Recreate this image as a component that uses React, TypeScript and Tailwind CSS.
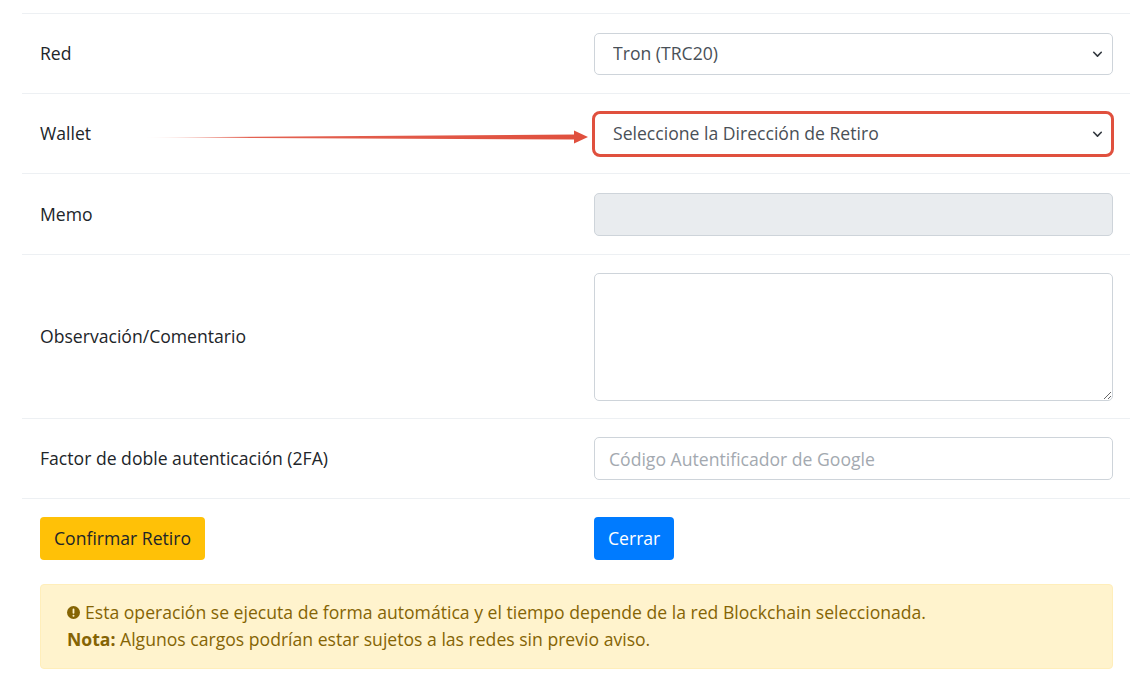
import React from 'react';

const font = { fontFamily: '"Open Sans", "Noto Sans", sans-serif' };

// Chevron del select
const Chevron = () => (
  <svg className="pointer-events-none absolute right-[10px] top-1/2 -translate-y-1/2 w-[11px] h-[11px]" viewBox="0 0 16 16">
    <path d="M2.5 5.5 8 11l5.5-5.5" fill="none" stroke="#343a40" strokeWidth={2.4} strokeLinecap="round" strokeLinejoin="round" />
  </svg>
);

const Row: React.FC<{ label: string; h?: string; children: React.ReactNode }> = ({ label, h = 'h-[80px]', children }) => (
  <div className={`flex items-center border-t border-[#edf0f3] ${h}`}>
    <div className="w-[555px] pl-[18px] text-[17.6px] text-[#212529]">{label}</div>
    <div className="flex-1 pl-[17px] pr-[17px]">{children}</div>
  </div>
);

export default function App() {
  return (
    <div className="w-[1146px] h-[698px] bg-white overflow-hidden" style={font}>
      <div className="relative ml-[22px] mr-[16px] pt-[13px]">
        <Row label="Red">
          <div className="relative">
            <select className="appearance-none w-full h-[42px] rounded-[5px] border border-[#ced4da] bg-white pl-[18px] text-[17.6px] text-[#495057] outline-none" style={font}>
              <option>Tron (TRC20)</option>
            </select>
            <Chevron />
          </div>
        </Row>

        <Row label="Wallet">
          <div className="relative">
            <select className="appearance-none w-full h-[42px] rounded-[5px] border border-[#ced4da] bg-white pl-[18px] text-[17.6px] text-[#495057] outline-none" style={font}>
              <option>Seleccione la Dirección de Retiro</option>
            </select>
            <Chevron />
            {/* recuadro rojo de resaltado */}
            <div className="pointer-events-none absolute -left-[2px] -right-[1px] -top-[2px] -bottom-[2px] rounded-[8px] border-[3px] border-[#e0503e]" />
          </div>
        </Row>

        <Row label="Memo" h="h-[81px]">
          <input disabled className="w-full h-[43px] rounded-[5px] border border-[#ced4da] bg-[#e9ecef]" />
        </Row>

        <Row label="Observación/Comentario" h="h-[164px]">
          <textarea className="block w-full h-[128px] rounded-[5px] border border-[#ced4da] bg-white outline-none" />
        </Row>

        <Row label="Factor de doble autenticación (2FA)">
          <input
            placeholder="Código Autentificador de Google"
            className="w-full h-[43px] rounded-[5px] border border-[#ced4da] bg-white pl-[14px] text-[17.6px] text-[#495057] placeholder:text-[#a3a9b0] outline-none"
            style={font}
          />
        </Row>

        <div className="flex border-t border-[#edf0f3] pt-[18px]">
          <div className="w-[555px] pl-[18px]">
            <button className="h-[43px] px-[14px] rounded-[4px] bg-[#ffc107] text-[17.6px] text-[#212529]">Confirmar Retiro</button>
          </div>
          <div className="flex-1 pl-[17px]">
            <button className="h-[43px] px-[14px] rounded-[4px] bg-[#007bff] text-[17.6px] text-white">Cerrar</button>
          </div>
        </div>

        <div className="mt-[24px] ml-[18px] mr-[17px] h-[85px] rounded-[4px] border border-[#ffeeba] bg-[#fff3cd] px-[26px] pt-[14px] text-[17.6px] leading-[27px] text-[#856404]">
          <div className="flex items-center">
            <svg className="w-[13px] h-[13px] mr-[5px] shrink-0" viewBox="0 0 16 16">
              <circle cx="8" cy="8" r="8" fill="#856404" />
              <rect x="6.9" y="3.2" width="2.2" height="6.3" rx="1" fill="#fff3cd" />
              <circle cx="8" cy="11.9" r="1.25" fill="#fff3cd" />
            </svg>
            <span>Esta operación se ejecuta de forma automática y el tiempo depende de la red Blockchain seleccionada.</span>
          </div>
          <div>
            <b className="font-bold">Nota:</b> Algunos cargos podrían estar sujetos a las redes sin previo aviso.
          </div>
        </div>

        {/* flecha roja */}
        <svg className="pointer-events-none absolute left-[120px] top-[127px] w-[470px] h-[20px]" viewBox="0 0 470 20">
          <defs>
            <linearGradient id="g" x1="0" x2="1" y1="0" y2="0">
              <stop offset="0" stopColor="#e0503e" stopOpacity="0" />
              <stop offset="0.25" stopColor="#e0503e" stopOpacity="0.9" />
              <stop offset="1" stopColor="#e0503e" />
            </linearGradient>
          </defs>
          <polygon points="0,10.5 434,7.5 434,12.5" fill="url(#g)" />
          <polygon points="432,3.5 446,10 432,16.5" fill="#e0503e" />
        </svg>
      </div>
    </div>
  );
}
